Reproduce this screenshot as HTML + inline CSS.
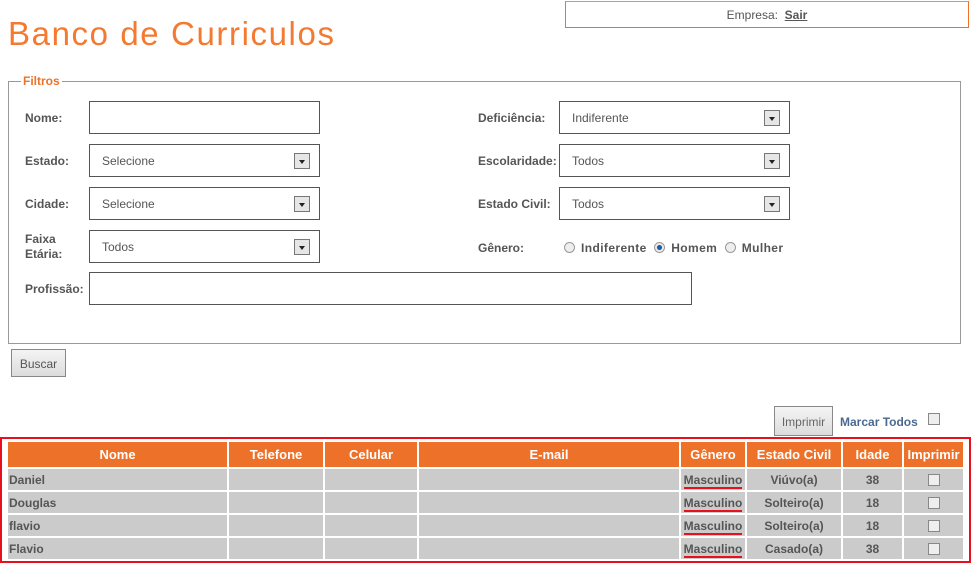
<!DOCTYPE html>
<html><head><meta charset="utf-8"><style>
*{box-sizing:border-box;margin:0;padding:0}
body{width:972px;height:563px;background:#fff;position:relative;overflow:hidden;font-family:"Liberation Sans",sans-serif;font-size:12px;color:#555}
.a{position:absolute}
.lbl{font-weight:bold;color:#555;font-size:12px}
.box{position:absolute;border:1px solid #555;background:#fff;height:33px;width:231px}
.box span{position:absolute;left:12px;top:9px;font-size:12px;color:#555}
.dd{position:absolute;right:9px;top:8px;width:16px;height:16px;border:1px solid #777;background:#e6e6e6}
.dd:after{content:"";position:absolute;left:4px;top:6px;border-left:3px solid transparent;border-right:3px solid transparent;border-top:4px solid #222}
.rad{display:inline-block;width:11px;height:11px;border:1px solid #999;border-radius:50%;background:#eee;vertical-align:-1px;margin-right:6px}
table{position:absolute;left:6px;top:440px;border-collapse:separate;border-spacing:2px;width:959px}
th{background:#ed7128;color:#fff;font-size:13px;height:25px;padding:0}
td{background:#cbcbcb;height:21px;font-weight:bold;color:#555;font-size:12px;padding:0 1px;text-align:center}
td.n{text-align:left}
td u{text-decoration:none;border-bottom:2px solid #e8101c}
.cb{display:inline-block;width:12px;height:12px;border:1px solid #888;background:#eee;vertical-align:middle}
</style></head><body>
<div class="a" style="left:565px;top:1px;width:404px;height:27px;border:1px solid #ed7128;border-top-color:#8bc34a;border-left-color:#6ab04c;text-align:center;padding-top:6px;font-size:12px;color:#555">Empresa:&nbsp; <u style="font-weight:bold">Sair</u></div>
<div class="a" style="left:8px;top:15px;font-size:33px;color:#f37a30;letter-spacing:1.6px">Banco de Curriculos</div>
<div class="a" style="left:8px;top:81px;width:953px;height:263px;border:1px solid #999"></div>
<div class="a" style="left:21px;top:74px;background:#fff;padding:0 2px;color:#ed7128;font-weight:bold;font-size:12px">Filtros</div>

<div class="a lbl" style="left:25px;top:111px">Nome:</div>
<div class="box" style="left:89px;top:101px"></div>
<div class="a lbl" style="left:25px;top:154px">Estado:</div>
<div class="box" style="left:89px;top:144px"><span>Selecione</span><div class="dd"></div></div>
<div class="a lbl" style="left:25px;top:197px">Cidade:</div>
<div class="box" style="left:89px;top:187px"><span>Selecione</span><div class="dd"></div></div>
<div class="a lbl" style="left:25px;top:232px;line-height:15px">Faixa<br>Etária:</div>
<div class="box" style="left:89px;top:230px"><span>Todos</span><div class="dd"></div></div>
<div class="a lbl" style="left:25px;top:282px">Profissão:</div>
<div class="box" style="left:89px;top:272px;width:603px"></div>

<div class="a lbl" style="left:478px;top:111px">Deficiência:</div>
<div class="box" style="left:559px;top:101px"><span>Indiferente</span><div class="dd"></div></div>
<div class="a lbl" style="left:478px;top:154px">Escolaridade:</div>
<div class="box" style="left:559px;top:144px"><span>Todos</span><div class="dd"></div></div>
<div class="a lbl" style="left:478px;top:197px">Estado Civil:</div>
<div class="box" style="left:559px;top:187px"><span>Todos</span><div class="dd"></div></div>
<div class="a lbl" style="left:478px;top:241px">Gênero:</div>
<div class="a lbl" style="left:564px;top:241px;letter-spacing:0.4px"><span class="rad"></span>Indiferente&nbsp; <span class="rad" style="background:radial-gradient(circle,#1a5fa8 35%,#eee 45%)"></span>Homem&nbsp; <span class="rad"></span>Mulher</div>

<div class="a" style="left:11px;top:349px;width:55px;height:28px;border:1px solid #888;background:linear-gradient(#f4f4f4,#dcdcdc);text-align:center;padding-top:7px;font-size:12px;color:#555">Buscar</div>
<div class="a" style="left:774px;top:406px;width:59px;height:30px;border:1px solid #888;background:linear-gradient(#f4f4f4,#dcdcdc);text-align:center;padding-top:8px;font-size:12px;color:#666">Imprimir</div>
<div class="a lbl" style="left:840px;top:415px;color:#4a6a90">Marcar Todos</div>
<div class="a cb" style="left:928px;top:413px"></div>

<div class="a" style="left:0;top:437px;width:971px;height:126px;border:2px solid #e8101c"></div>
<table>
<tr><th style="width:219px">Nome</th><th style="width:94px">Telefone</th><th style="width:92px">Celular</th><th style="width:260px">E-mail</th><th style="width:64px">Gênero</th><th style="width:94px">Estado Civil</th><th style="width:59px">Idade</th><th>Imprimir</th></tr>
<tr><td class="n">Daniel</td><td></td><td></td><td></td><td><u>Masculino</u></td><td>Viúvo(a)</td><td>38</td><td><span class="cb"></span></td></tr>
<tr><td class="n">Douglas</td><td></td><td></td><td></td><td><u>Masculino</u></td><td>Solteiro(a)</td><td>18</td><td><span class="cb"></span></td></tr>
<tr><td class="n">flavio</td><td></td><td></td><td></td><td><u>Masculino</u></td><td>Solteiro(a)</td><td>18</td><td><span class="cb"></span></td></tr>
<tr><td class="n">Flavio</td><td></td><td></td><td></td><td><u>Masculino</u></td><td>Casado(a)</td><td>38</td><td><span class="cb"></span></td></tr>
</table>
</body></html>
